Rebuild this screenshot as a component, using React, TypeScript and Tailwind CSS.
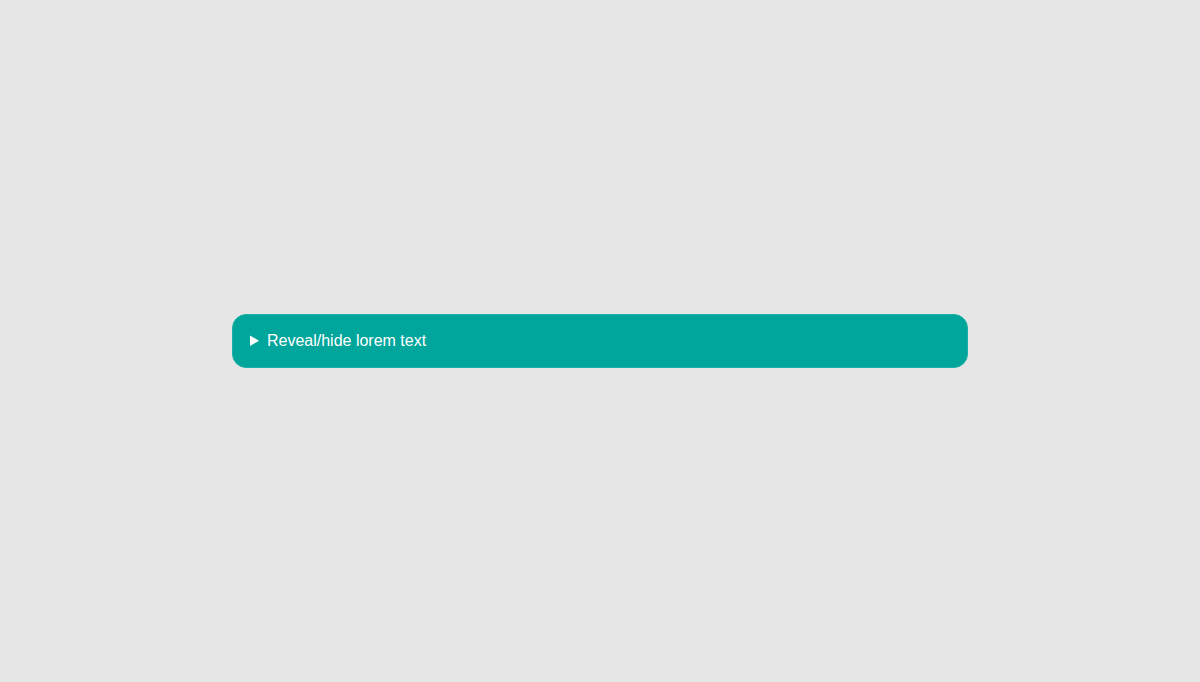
export default function App() {
  return (
    <div className="min-h-screen flex items-center justify-center bg-[#e6e6e6] font-['Liberation_Sans',Arial,sans-serif]">
      <details className="w-[736px] rounded-[14px] border border-[#1fb0a7] bg-[#00a59b] text-white">
        <summary className="cursor-pointer px-[17px] py-[14px] text-base leading-6">
          Reveal/hide lorem text
        </summary>
        <p className="px-[17px] pb-4 text-base">
          Lorem ipsum dolor sit amet, consectetur adipiscing elit.
        </p>
      </details>
    </div>
  )
}
